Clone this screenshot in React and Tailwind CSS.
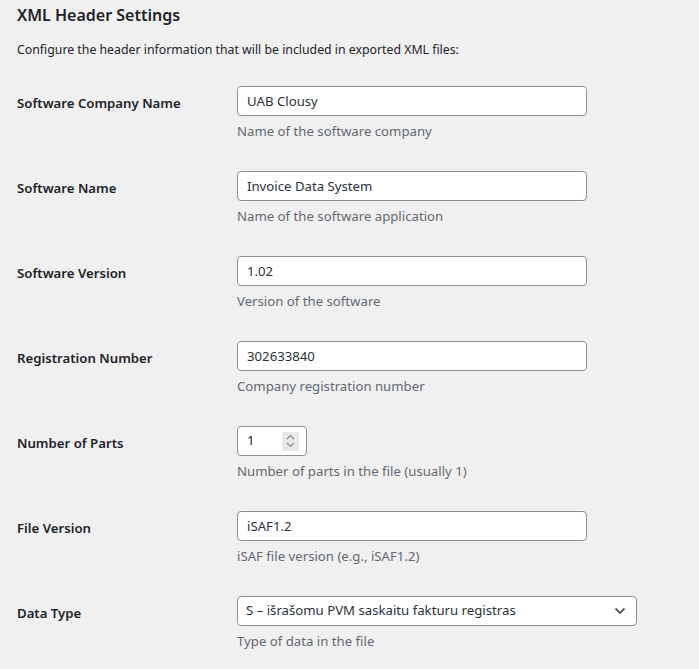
const fields = [
  { label: "Software Company Name", value: "UAB Clousy", desc: "Name of the software company" },
  { label: "Software Name", value: "Invoice Data System", desc: "Name of the software application" },
  { label: "Software Version", value: "1.02", desc: "Version of the software" },
  { label: "Registration Number", value: "302633840", desc: "Company registration number" },
  { label: "Number of Parts", value: "1", desc: "Number of parts in the file (usually 1)", type: "number" },
  { label: "File Version", value: "iSAF1.2", desc: "iSAF file version (e.g., iSAF1.2)" },
  {
    label: "Data Type",
    value: "S – išrašomu PVM saskaitu fakturu registras",
    desc: "Type of data in the file",
    type: "select",
  },
];

function Field({ field }) {
  if (field.type === "number") {
    return (
      <div className="flex items-center w-[70px] h-[30px] bg-white border border-[#8c8f94] rounded-[4px] pl-[9px] pr-[7px]">
        <span className="flex-1 text-[13.2px]">{field.value}</span>
        <span className="flex flex-col items-center justify-center w-[17px] h-[19px] bg-[#e9e9ed]">
          <svg width="9" height="14" viewBox="0 0 9 14" fill="none" stroke="#8a8a8a" strokeWidth="1.2">
            <path d="M1 5 L4.5 1.5 L8 5" />
            <path d="M1 9 L4.5 12.5 L8 9" />
          </svg>
        </span>
      </div>
    );
  }
  if (field.type === "select") {
    return (
      <div className="flex items-center w-[400px] h-[30px] bg-white border border-[#8c8f94] rounded-[4px] pl-[8px] pr-[10px]">
        <span className="flex-1 text-[13.2px] text-[#2c3338]">{field.value}</span>
        <svg width="12" height="8" viewBox="0 0 12 8" fill="none" stroke="#50575e" strokeWidth="1.8">
          <path d="M1.5 1.5 L6 6 L10.5 1.5" />
        </svg>
      </div>
    );
  }
  return (
    <input
      readOnly
      defaultValue={field.value}
      className="w-[350px] h-[30px] bg-white border border-[#8c8f94] rounded-[4px] px-[9px] text-[13.2px] text-[#2c3338] outline-none"
    />
  );
}

export default function App() {
  return (
    <div
      className="min-h-[669px] bg-[#f0f0f1] text-[#1d2327] pl-[17px]"
      style={{ fontFamily: '"Noto Sans", "Open Sans", sans-serif' }}
    >
      <h2 className="pt-[4px] text-[16px] font-semibold leading-[22px]">XML Header Settings</h2>
      <p className="mt-[14px] text-[12.3px] leading-[19px]">
        Configure the header information that will be included in exported XML files:
      </p>
      <div className="mt-[12px]">
        {fields.map((f) => (
          <div key={f.label} className="flex h-[85px]">
            <div className="w-[220px] pt-[23px] text-[13.2px] font-semibold leading-[18px]">{f.label}</div>
            <div className="pt-[15px]">
              <Field field={f} />
              <p className="mt-[5px] text-[13.2px] leading-[20px] text-[#646970]">{f.desc}</p>
            </div>
          </div>
        ))}
      </div>
    </div>
  );
}
